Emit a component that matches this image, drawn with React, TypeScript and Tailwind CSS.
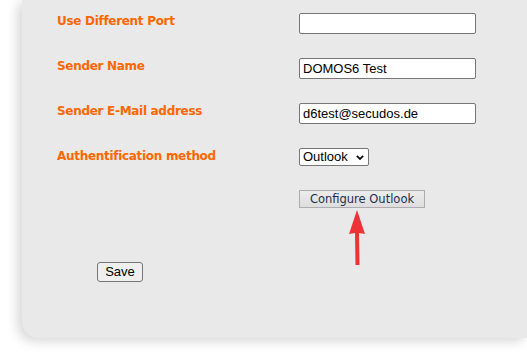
import React from 'react';

const labelCls =
  "w-[242px] font-['DejaVu_Sans',Tahoma,sans-serif] text-[12px] leading-[16px] font-bold tracking-[-0.3px] text-[#ff6600]";

const inputCls =
  "w-[177px] h-[21px] border border-[#767676] rounded-[2px] bg-white px-[3px] font-['Liberation_Sans',Arial,sans-serif] text-[13px] text-black outline-none";

const UpArrow = () => (
  <svg width="20" height="58" viewBox="0 0 20 58" className="block">
    <path d="M10 0 L18 24 L12 23 L12.5 55 L8.5 55 L8 23 L2 24 Z" fill="#ee3338" />
  </svg>
);

const App = () => {
  return (
    <div className="min-h-[354px] w-[527px] bg-white overflow-hidden">
      <div className="ml-[22px] h-[338px] bg-[#e9e9e9] rounded-bl-[16px] shadow-[-4px_3px_12px_rgba(0,0,0,0.17)] pt-[13px]">
        <div className="pl-[35px]">
          <div className="flex h-[45px]">
            <div className={labelCls}>Use Different Port</div>
            <input className={inputCls} defaultValue="" />
          </div>
          <div className="flex h-[45px]">
            <div className={labelCls}>Sender Name</div>
            <input className={inputCls} defaultValue="DOMOS6 Test" />
          </div>
          <div className="flex h-[45px]">
            <div className={labelCls}>Sender E-Mail address</div>
            <input className={inputCls} defaultValue="d6test@secudos.de" />
          </div>
          <div className="flex h-[42px]">
            <div className={labelCls}>Authentification method</div>
            <div className="relative w-[70px] h-[18px]">
              <select className="block appearance-none w-full h-full border border-[#767676] rounded-[2px] bg-white pl-[3px] font-['Liberation_Sans',Arial,sans-serif] text-[13px] leading-[16px] text-black outline-none">
                <option>Outlook</option>
              </select>
              <svg width="8" height="5" viewBox="0 0 8 5" className="absolute left-[57px] top-[7px] pointer-events-none">
                <path d="M0.8 0.8 L4 4 L7.2 0.8" fill="none" stroke="#111" strokeWidth="1.8" />
              </svg>
            </div>
          </div>
          <div className="flex">
            <div className="w-[242px]" />
            <div className="flex flex-col items-start">
              <button className="block w-[126px] h-[18px] border border-[#adadad] bg-gradient-to-b from-[#ececec] to-[#dedede] font-['DejaVu_Sans',Tahoma,sans-serif] text-[11.5px] leading-[16px] text-[#1d2f4d]">
                Configure Outlook
              </button>
              <div className="ml-[48px] mt-[2px]">
                <UpArrow />
              </div>
            </div>
          </div>
        </div>
        <div className="flex pl-[75px] mt-[-6px]">
          <button className="block w-[46px] h-[20px] border border-[#767676] rounded-[3px] bg-[#efefef] font-['Liberation_Sans',Arial,sans-serif] text-[13px] leading-[16px] text-black">
            Save
          </button>
        </div>
      </div>
    </div>
  );
};

export default App;
